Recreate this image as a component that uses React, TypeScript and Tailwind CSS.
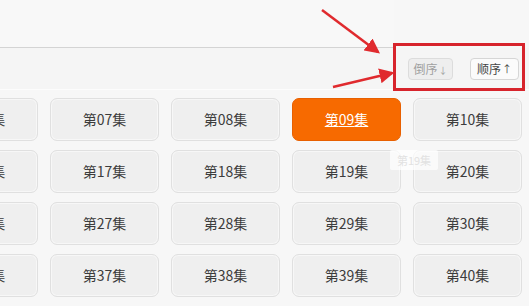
import React from "react";

const rows = [
  [6, 7, 8, 9, 10],
  [16, 17, 18, 19, 20],
  [26, 27, 28, 29, 30],
  [36, 37, 38, 39, 40],
];

const pad = (n: number) => (n < 10 ? "0" + n : "" + n);

export default function App() {
  return (
    <div
      className="relative w-[529px] h-[306px] overflow-hidden bg-[#f7f7f7]"
      style={{ fontFamily: '"Noto Sans CJK SC", "Noto Sans", sans-serif' }}
    >
      {/* top area */}
      <div className="h-[48px] w-[394px] border-b border-[#d4d4d4] bg-[#f8f8f8]" />
      {/* sort bar */}
      <div className="h-[42px] flex items-center justify-end pr-[10px] gap-[17px] bg-[#f5f5f5] border-b border-[#fcfcfc]">
        <button className="h-[22px] w-[45px] rounded-[4px] border border-[#dcdcdc] bg-[#eeeeee] text-[12px] text-[#a0a0a0] flex items-center justify-center leading-none">
          倒序<span className="text-[9px] ml-[1px] mt-[4px]">↓</span>
        </button>
        <button className="h-[22px] w-[49px] rounded-[4px] border border-[#d6d6d6] bg-[#fbfbfb] text-[12px] text-[#444] flex items-center justify-center leading-none">
          顺序<span className="text-[10px] ml-[1px]">↑</span>
        </button>
      </div>
      {/* episode grid */}
      <div className="mt-[8px] ml-[-71px] grid grid-cols-[repeat(5,109px)] gap-x-[12px] gap-y-[9px]">
        {rows.flat().map((n) =>
          n === 9 ? (
            <div
              key={n}
              className="h-[43px] rounded-[7px] bg-[#f76a00] border border-[#e86000] flex items-center justify-center text-[14px] text-white underline"
            >
              第{pad(n)}集
            </div>
          ) : (
            <div
              key={n}
              className="h-[43px] rounded-[7px] bg-[#efefef] border border-[#e0e0e0] shadow-[inset_0_0_0_1px_#f7f7f7] flex items-center justify-center text-[14px] text-[#3c3c3c]"
            >
              第{pad(n)}集
            </div>
          )
        )}
      </div>

      {/* faded tooltip */}
      <div className="absolute left-[390px] top-[150px] w-[48px] h-[20px] bg-white/70 rounded-[2px] flex items-center justify-center text-[11px] text-[#e2e2e2]">
        第19集
      </div>

      {/* annotation box */}
      <div className="absolute left-[393px] top-[43px] w-[132px] h-[48px] border-[3px] border-[#d7242c]" />

      {/* annotation arrows */}
      <svg
        className="absolute left-0 top-0"
        width="529"
        height="306"
        viewBox="0 0 529 306"
      >
        <defs>
          <marker
            id="ah"
            markerWidth="6"
            markerHeight="6"
            refX="5"
            refY="3"
            orient="auto"
            markerUnits="strokeWidth"
          >
            <path d="M0,0 L6,3 L0,6 Z" fill="#e02a2e" />
          </marker>
        </defs>
        <line
          x1="322"
          y1="10"
          x2="378"
          y2="52"
          stroke="#e02a2e"
          strokeWidth="2.5"
          markerEnd="url(#ah)"
        />
        <line
          x1="333"
          y1="87"
          x2="392"
          y2="73"
          stroke="#e02a2e"
          strokeWidth="2.5"
          markerEnd="url(#ah)"
        />
      </svg>
    </div>
  );
}
